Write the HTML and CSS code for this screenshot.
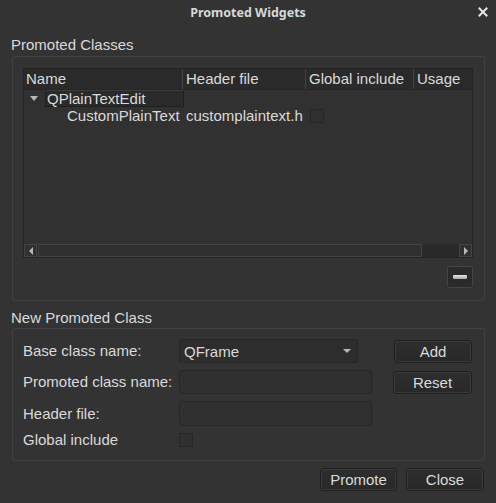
FILE: index.html
```html
<!DOCTYPE html>
<html>
<head>
<meta charset="utf-8">
<link rel="stylesheet" href="styles.css">
</head>
<body>
<div class="dialog">
  <div class="titlebar">
    <span class="title">Promoted Widgets</span>
    <span class="close-x">
      <svg width="10" height="10" viewBox="0 0 10 10"><path d="M1.5 1.5 L8.5 8.5 M8.5 1.5 L1.5 8.5" stroke="#e6e6e6" stroke-width="2" stroke-linecap="square"/></svg>
    </span>
  </div>

  <div class="section-label first">Promoted Classes</div>
  <div class="group group-top">
    <div class="tree">
      <div class="tree-header">
        <div class="col c1">Name</div>
        <div class="col c2">Header file</div>
        <div class="col c3">Global include</div>
        <div class="col c4">Usage</div>
      </div>
      <div class="tree-body">
        <div class="row row-parent">
          <span class="arrow"></span>
          <span class="parent-box">QPlainTextEdit</span>
        </div>
        <div class="row row-child">
          <span class="cell cc1">CustomPlainText</span>
          <span class="cell cc2">customplaintext.h</span>
          <span class="cell cc3"><span class="check"></span></span>
        </div>
      </div>
      <div class="hscroll">
        <div class="sb-btn"><span class="tri-left"></span></div>
        <div class="sb-thumb"></div>
        <div class="sb-rest"></div>
        <div class="sb-btn"><span class="tri-right"></span></div>
      </div>
    </div>
    <div class="minus-row">
      <button class="minus-btn"><span class="minus-bar"></span></button>
    </div>
  </div>

  <div class="section-label second">New Promoted Class</div>
  <div class="group group-bottom">
    <div class="form">
      <div class="lbl">Base class name:</div>
      <div class="combo"><span>QFrame</span><span class="combo-arrow"></span></div>
      <button class="btn side add">Add</button>

      <div class="lbl">Promoted class name:</div>
      <div class="input"></div>
      <button class="btn side reset">Reset</button>

      <div class="lbl">Header file:</div>
      <div class="input"></div>
      <div></div>

      <div class="lbl">Global include</div>
      <div class="cbwrap"><span class="check"></span></div>
      <div></div>
    </div>
  </div>

  <div class="footer">
    <button class="btn foot promote">Promote</button>
    <button class="btn foot closeb">Close</button>
  </div>
</div>
</body>
</html>
```

FILE: styles.css
```css
* { box-sizing: border-box; }
html, body {
  margin: 0;
  padding: 0;
  background: #333333;
}
body {
  width: 496px;
  height: 503px;
  overflow: hidden;
  font-family: "Liberation Sans", Arial, sans-serif;
  font-size: 15px;
  color: #dadada;
}
.dialog {
  width: 496px;
  height: 503px;
  background: #333333;
  display: flex;
  flex-direction: column;
}
.titlebar {
  height: 24px;
  position: relative;
  display: flex;
  align-items: center;
  justify-content: center;
}
.title {
  font-family: "Noto Sans", sans-serif;
  font-weight: bold;
  font-size: 12.5px;
  color: #d8d8d8;
}
.close-x {
  position: absolute;
  right: 8px;
  top: 7px;
  width: 10px;
  height: 10px;
  display: flex;
}
.section-label {
  padding-left: 11px;
  height: 19px;
  line-height: 19px;
}
.section-label.first { margin-top: 11px; }
.section-label.second { margin-top: 7px; }
.group {
  margin: 2px 11px 0 12px;
  border: 1px solid #424242;
  border-radius: 3px;
}
.group-top {
  height: 245px;
  padding: 11px 11px 0 10px;
}
.tree {
  height: 190px;
  border: 1px solid #232323;
  background: #313131;
  display: flex;
  flex-direction: column;
}
.tree-header {
  height: 21px;
  display: flex;
  background: #2a2a2a;
  border-bottom: 1px solid #262626;
}
.col {
  height: 20px;
  line-height: 20px;
  padding-left: 2px;
  border-right: 1px solid #444;
  white-space: nowrap;
  overflow: hidden;
}
.c1 { width: 159px; }
.c2 { width: 123px; padding-left: 3px; }
.c3 { width: 108px; padding-left: 3px; }
.c4 { flex: 1; border-right: none; padding-left: 3px; }
.tree-body {
  flex: 1;
}
.row {
  height: 17px;
  display: flex;
  align-items: center;
}
.row-parent {
  padding-left: 6px;
}
.arrow {
  width: 0;
  height: 0;
  border-left: 4px solid transparent;
  border-right: 4px solid transparent;
  border-top: 5px solid #b8b8b8;
  margin-right: 7px;
}
.parent-box {
  width: 139px;
  height: 17px;
  line-height: 15px;
  padding-left: 1px;
  border: 1px solid #1f1f1f;
  border-top-color: #3c3c3c;
  background: #2a2a2a;
}
.row-child .cell { white-space: nowrap; line-height: 16px; }
.cc1 { width: 159px; padding-left: 43px; }
.cc2 { width: 123px; padding-left: 3px; }
.cc3 { width: 108px; padding-left: 4px; display: flex; align-items: center; }
.check {
  display: inline-block;
  width: 14px;
  height: 14px;
  border: 1px solid #262626;
  background: #303030;
  border-radius: 1px;
}
.hscroll {
  height: 13px;
  display: flex;
  background: #292929;
}
.sb-btn {
  width: 13px;
  height: 13px;
  border: 1px solid #444;
  background: #303030;
  display: flex;
  align-items: center;
  justify-content: center;
}
.tri-left {
  width: 0; height: 0;
  border-top: 4px solid transparent;
  border-bottom: 4px solid transparent;
  border-right: 4px solid #b8b8b8;
}
.tri-right {
  width: 0; height: 0;
  border-top: 4px solid transparent;
  border-bottom: 4px solid transparent;
  border-left: 4px solid #b8b8b8;
}
.sb-thumb {
  width: 384px;
  height: 13px;
  margin-left: 1px;
  border: 1px solid #444;
  background: #303030;
}
.sb-rest { flex: 1; }
.minus-row {
  display: flex;
  justify-content: flex-end;
  margin-top: 8px;
}
.minus-btn {
  width: 26px;
  height: 22px;
  padding: 0;
  border: 1px solid #454545;
  border-radius: 3px;
  background: #2a2a2a;
  display: flex;
  align-items: center;
  justify-content: center;
}
.minus-bar {
  width: 14px;
  height: 4px;
  background: linear-gradient(#e6e6e6, #a8a8a8);
  border-radius: 1px;
}
.group-bottom {
  margin-top: 1px;
  height: 133px;
  padding: 10px 11px 0 10px;
}
.form {
  display: grid;
  grid-template-columns: 156px 193px 100px;
  column-gap: 0;
  grid-template-rows: 24px 24px 25px 14px;
  row-gap: 7px;
  align-items: center;
}
.lbl { white-space: nowrap; line-height: 20px; }
.combo {
  width: 179px;
  height: 24px;
  border: 1px solid #262626;
  border-radius: 3px;
  background: #2d2d2d;
  display: flex;
  align-items: center;
  justify-content: space-between;
  padding: 0 6px 0 4px;
}
.combo-arrow {
  width: 0; height: 0;
  border-left: 4px solid transparent;
  border-right: 4px solid transparent;
  border-top: 4px solid #b8b8b8;
}
.input {
  height: 100%;
  border: 1px solid #272727;
  border-radius: 3px;
  background: #303030;
}
.cbwrap { display: flex; align-items: center; height: 14px; }
.btn {
  font-family: "Liberation Sans", Arial, sans-serif;
  font-size: 15px;
  color: #dadada;
  background: linear-gradient(#2e2e2e, #282828);
  border: 1px solid #1f1f1f;
  border-radius: 3px;
  box-shadow: inset 0 0 0 1px #3a3a3a;
  padding: 0;
}
.btn.side {
  height: 23px;
  justify-self: end;
}
.add { width: 78px; }
.reset { width: 79px; }
.footer {
  display: flex;
  justify-content: flex-end;
  gap: 9px;
  margin-top: 7px;
  padding-right: 12px;
}
.btn.foot {
  height: 23px;
}
.promote { width: 77px; }
.closeb { width: 78px; }
```
